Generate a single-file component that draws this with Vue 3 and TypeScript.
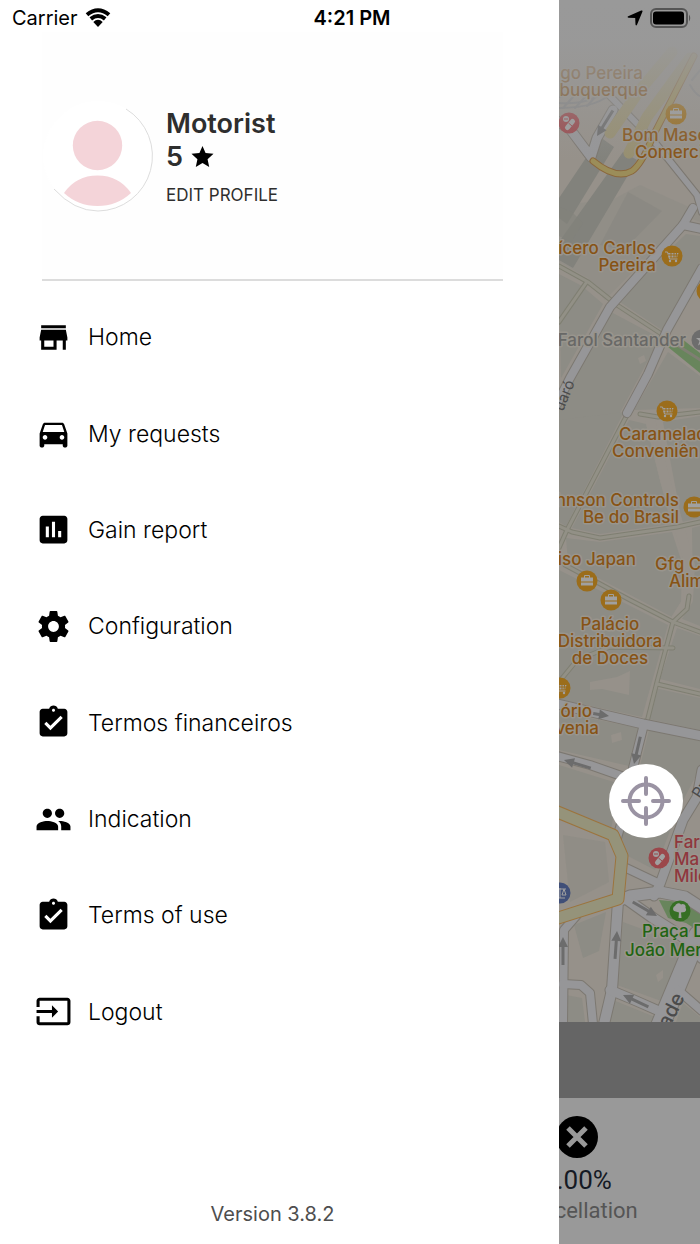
<script setup lang="ts">
interface MenuItem {
  label: string
  icon: string
}

const clipboard =
  'M19 3h-4.18C14.4 1.84 13.3 1 12 1c-1.3 0-2.4.84-2.82 2H5c-1.1 0-2 .9-2 2v14c0 1.1.9 2 2 2h14c1.1 0 2-.9 2-2V5c0-1.1-.9-2-2-2zm-7 0c.55 0 1 .45 1 1s-.45 1-1 1-1-.45-1-1 .45-1 1-1zm-2 14l-4-4 1.41-1.41L10 14.17l6.59-6.59L18 9l-8 8z'

const menu: MenuItem[] = [
  { label: 'Home', icon: 'M20 4H4v2h16V4zm1 10v-2l-1-5H4l-1 5v2h1v6h10v-6h4v6h2v-6h1zm-9 4H6v-4h6v4z' },
  {
    label: 'My requests',
    icon: 'M18.92 6.01C18.72 5.42 18.16 5 17.5 5h-11c-.66 0-1.21.42-1.42 1.01L3 12v8c0 .55.45 1 1 1h1c.55 0 1-.45 1-1v-1h12v1c0 .55.45 1 1 1h1c.55 0 1-.45 1-1v-8l-2.08-5.99zM6.5 16c-.83 0-1.5-.67-1.5-1.5S5.67 13 6.5 13s1.5.67 1.5 1.5S7.33 16 6.5 16zm11 0c-.83 0-1.5-.67-1.5-1.5s.67-1.5 1.5-1.5 1.5.67 1.5 1.5-.67 1.5-1.5 1.5zM5 11l1.5-4.5h11L19 11H5z',
  },
  {
    label: 'Gain report',
    icon: 'M19 3H5c-1.1 0-2 .9-2 2v14c0 1.1.9 2 2 2h14c1.1 0 2-.9 2-2V5c0-1.1-.9-2-2-2zM9 17H7v-7h2v7zm4 0h-2V7h2v10zm4 0h-2v-4h2v4z',
  },
  {
    label: 'Configuration',
    icon: 'M19.43 12.98c.04-.32.07-.64.07-.98s-.03-.66-.07-.98l2.11-1.65c.19-.15.24-.42.12-.64l-2-3.46c-.12-.22-.39-.3-.61-.22l-2.49 1c-.52-.4-1.08-.73-1.69-.98l-.38-2.65C14.46 2.18 14.25 2 14 2h-4c-.25 0-.46.18-.49.42l-.38 2.65c-.61.25-1.17.59-1.69.98l-2.49-1c-.23-.09-.49 0-.61.22l-2 3.46c-.13.22-.07.49.12.64l2.11 1.65c-.04.32-.07.65-.07.98s.03.66.07.98l-2.11 1.65c-.19.15-.24.42-.12.64l2 3.46c.12.22.39.3.61.22l2.49-1c.52.4 1.08.73 1.69.98l.38 2.65c.03.24.24.42.49.42h4c.25 0 .46-.18.49-.42l.38-2.65c.61-.25 1.17-.59 1.69-.98l2.49 1c.23.09.49 0 .61-.22l2-3.46c.12-.22.07-.49-.12-.64l-2.11-1.65zM12 15.5c-1.93 0-3.5-1.57-3.5-3.5s1.57-3.5 3.5-3.5 3.5 1.57 3.5 3.5-1.57 3.5-3.5 3.5z',
  },
  { label: 'Termos financeiros', icon: clipboard },
  {
    label: 'Indication',
    icon: 'M16 11c1.66 0 2.99-1.34 2.99-3S17.66 5 16 5c-1.66 0-3 1.34-3 3s1.34 3 3 3zm-8 0c1.66 0 2.99-1.34 2.99-3S9.66 5 8 5C6.34 5 5 6.34 5 8s1.34 3 3 3zm0 2c-2.33 0-7 1.17-7 3.5V19h14v-2.5c0-2.33-4.67-3.5-7-3.5zm8 0c-.29 0-.62.02-.97.05 1.16.84 1.97 1.97 1.97 3.45V19h6v-2.5c0-2.33-4.67-3.5-7-3.5z',
  },
  { label: 'Terms of use', icon: clipboard },
  {
    label: 'Logout',
    icon: 'M21 3.01H3c-1.1 0-2 .9-2 2V9h2V4.99h18v14.03H3V15H1v4.01c0 1.1.9 1.98 2 1.98h18c1.1 0 2-.88 2-1.98v-14c0-1.11-.9-2-2-2zM11 16l4-4-4-4v3H1v2h10v3z',
  },
]

type Kind = 'shop' | 'health' | 'sight' | 'park' | 'faded'

interface MapLabel {
  text: string
  x: number
  y: number
  anchor: 'start' | 'middle' | 'end'
  kind: Kind
}

const labels: MapLabel[] = [
  { text: 'go Pereira', x: 643, y: 79, anchor: 'end', kind: 'faded' },
  { text: 'buquerque', x: 648, y: 96, anchor: 'end', kind: 'faded' },
  { text: 'Bom Masc', x: 622, y: 141, anchor: 'start', kind: 'shop' },
  { text: 'Comerci', x: 635, y: 158, anchor: 'start', kind: 'shop' },
  { text: 'ícero Carlos', x: 656, y: 254, anchor: 'end', kind: 'shop' },
  { text: 'Pereira', x: 656, y: 271, anchor: 'end', kind: 'shop' },
  { text: 'Farol Santander', x: 686, y: 346, anchor: 'end', kind: 'sight' },
  { text: 'Caramelad', x: 619, y: 440, anchor: 'start', kind: 'shop' },
  { text: 'Conveniên', x: 612, y: 457, anchor: 'start', kind: 'shop' },
  { text: 'hnson Controls', x: 679, y: 506, anchor: 'end', kind: 'shop' },
  { text: 'Be do Brasil', x: 679, y: 523, anchor: 'end', kind: 'shop' },
  { text: 'iso Japan', x: 636, y: 565, anchor: 'end', kind: 'shop' },
  { text: 'Gfg Co', x: 655, y: 570, anchor: 'start', kind: 'shop' },
  { text: 'Alim', x: 669, y: 587, anchor: 'start', kind: 'shop' },
  { text: 'Palácio', x: 610, y: 630, anchor: 'middle', kind: 'shop' },
  { text: 'Distribuidora', x: 610, y: 647, anchor: 'middle', kind: 'shop' },
  { text: 'de Doces', x: 610, y: 664, anchor: 'middle', kind: 'shop' },
  { text: 'ório', x: 592, y: 717, anchor: 'end', kind: 'shop' },
  { text: 'venia', x: 599, y: 734, anchor: 'end', kind: 'shop' },
  { text: 'Far', x: 674, y: 848, anchor: 'start', kind: 'health' },
  { text: 'Mar', x: 674, y: 865, anchor: 'start', kind: 'health' },
  { text: 'Mile', x: 674, y: 882, anchor: 'start', kind: 'health' },
  { text: 'Praça D', x: 642, y: 937, anchor: 'start', kind: 'park' },
  { text: 'João Mer', x: 625, y: 956, anchor: 'start', kind: 'park' },
]

interface Pin {
  x: number
  y: number
  glyph: 'cart' | 'bag' | 'pill' | 'tree' | 'star' | 'law'
}

const pins: Pin[] = [
  { x: 676, y: 114, glyph: 'bag' },
  { x: 569, y: 123, glyph: 'pill' },
  { x: 672, y: 256, glyph: 'cart' },
  { x: 707, y: 291, glyph: 'cart' },
  { x: 702, y: 340, glyph: 'star' },
  { x: 667, y: 411, glyph: 'cart' },
  { x: 694, y: 507, glyph: 'bag' },
  { x: 587, y: 581, glyph: 'bag' },
  { x: 611, y: 600, glyph: 'bag' },
  { x: 560, y: 688, glyph: 'cart' },
  { x: 659, y: 858, glyph: 'pill' },
  { x: 560, y: 893, glyph: 'law' },
  { x: 680, y: 911, glyph: 'tree' },
]

const pinColor: Record<Pin['glyph'], string> = {
  cart: '#9b6d1b',
  bag: '#9b6d1b',
  pill: '#9b474b',
  tree: '#366f24',
  star: '#6d6d6d',
  law: '#404f78',
}

/* One-way arrows: head position, direction in degrees, shaft length. */
const arrows = [
  { x: 597, y: 136, angle: 122, length: 30 },
  { x: 609, y: 716, angle: 9, length: 16 },
  { x: 634, y: 764, angle: 103, length: 28 },
  { x: 564, y: 760, angle: 197, length: 28 },
  { x: 657, y: 916, angle: 30, length: 28 },
  { x: 617, y: 931, angle: -86, length: 28 },
  { x: 563, y: 937, angle: -90, length: 28 },
  { x: 623, y: 995, angle: 205, length: 28 },
]

/* Footpaths and narrow lanes. */
const lanes = [
  'M559 266 588 282 617 305 663 335',
  'M586 283 559 322',
  'M627 415 567 530 559 548',
  'M559 526 572 532 600 538 677 527 700 522',
  'M640 414 658 417 700 412',
  'M565 565 630 600 673 622 700 632',
  'M689 596 687 609 673 622 657 682 647 722',
  'M657 684 700 694',
  'M559 682 577 660 610 647 673 648',
]

const streets = [
  { d: 'M693 208 683 225 610 307 570 378 557 404', w: 8 },
  { d: 'M683 225 702 229', w: 8 },
  { d: 'M702 268 667 330 648 374 627 413', w: 8 },
  { d: 'M606 92 653 140 697 195 702 212', w: 6 },
  { d: 'M557 121 570 129 591 157 597 138 613 110', w: 9 },
  { d: 'M557 704 643 724 702 736', w: 9 },
  { d: 'M644 724 633 768', w: 8 },
  { d: 'M557 756 590 765 630 779', w: 8 },
  { d: 'M617 838 628 800', w: 8 },
  { d: 'M702 770 697 797 683 820 660 884 654 896', w: 9 },
  { d: 'M622 866 660 884', w: 8 },
  { d: 'M618 901 630 896 660 892 685 897 702 908', w: 11 },
  { d: 'M622 896 653 918 683 937 702 958', w: 10 },
  { d: 'M618 901 612 990 604 1024', w: 10 },
  { d: 'M610 990 634 1000 666 1014', w: 9 },
  { d: 'M698 935 660 1026', w: 18 },
  { d: 'M678 990 702 1011', w: 8 },
  { d: 'M577 915 564 930 563 1024', w: 8 },
  { d: 'M563 984 581 985 590 993 593 1024', w: 8 },
]

const avenues = 'M555 811 613 835 622 856 618 899 555 919'
</script>

<template>
  <main class="screen">
    <header class="status">
      <div class="status-left">
        <span>Carrier</span>
        <svg class="wifi" viewBox="0 0 26 20" aria-hidden="true">
          <path d="M2 6.800Q13-2.200 24 6.800M5.800 10.900Q13 5 20.200 10.900" />
          <path class="solid" d="M8.300 14Q13 9.700 17.700 14L13 19Z" />
        </svg>
      </div>
      <time class="clock">4:21 PM</time>
      <div class="status-right">
        <svg class="locate-arrow" viewBox="0 0 16 16" aria-hidden="true">
          <path d="M14.200.600Q16 0 15.400 1.800L10 14.800Q9 16.500 8.500 14.500L8.200 8 1.500 7.700Q-.500 7.300 1.200 6.200Z" />
        </svg>
        <svg class="battery" viewBox="0 0 42 20" aria-hidden="true">
          <rect class="case" x="1" y="1" width="36" height="18" rx="5" />
          <rect x="3" y="3.500" width="31" height="13" rx="3" />
          <path class="cap" d="M39 6.500q2.500 3.500 0 7z" />
        </svg>
      </div>
    </header>

    <aside class="drawer">
      <section class="profile">
        <svg class="avatar" viewBox="0 0 112 112" role="img" aria-label="Profile picture">
          <circle cx="56" cy="56" r="55" fill="#fff" />
          <path class="rim" d="M84 9A55 55 0 0 1 56 111Q32 111 12 89" />
          <circle cx="55.500" cy="45.500" r="24.700" fill="#f4d4d9" />
          <path d="M22 93Q34 75.500 55.500 75.500T89 93Q75 106 55.500 106T22 93Z" fill="#f4d4d9" />
        </svg>
        <div class="identity">
          <h1>Motorist</h1>
          <p class="rating">
            5
            <svg viewBox="0 0 24 24" aria-label="stars">
              <path d="M12 1l3.200 7.400 8.300.8-6.200 5.600 1.700 8.200-7-4.200L5 23l1.700-8.200L.5 9.200l8.300-.8z" />
            </svg>
          </p>
          <a class="edit" href="#profile">EDIT PROFILE</a>
        </div>
      </section>

      <nav class="menu">
        <a v-for="item in menu" :key="item.label" href="#">
          <svg viewBox="0 0 24 24" aria-hidden="true"><path fill-rule="evenodd" :d="item.icon" /></svg>
          <span>{{ item.label }}</span>
        </a>
      </nav>

      <footer class="version">Version 3.8.2</footer>
    </aside>

    <section class="behind">
      <div class="map">
        <svg class="map-art" viewBox="559 0 141 1022" preserveAspectRatio="xMinYMin slice" role="img" aria-label="Map">
          <defs>
            <linearGradient id="haze" x1="0" y1="0" x2="0" y2="1">
              <stop offset="0" stop-color="#999" />
              <stop offset=".25" stop-color="#999" stop-opacity=".96" />
              <stop offset=".5" stop-color="#999" stop-opacity=".65" />
              <stop offset="1" stop-color="#999" stop-opacity="0" />
            </linearGradient>
          </defs>
          <rect x="559" width="141" height="1022" fill="#96918a" />

          <g class="blocks">
            <path d="M612 200 640 185 700 212V222L688 217 676 228 605 300 588 278 559 262V205Z" opacity=".6" />
            <path d="M617 300 686 234 700 236V262L662 330Z" />
            <path d="M559 274 582 286 603 304 561 378Z" />
            <path d="M611 312 660 338 621 411 559 500V400L576 377Z" />
            <path d="M668 352 700 376V408L634 410Z" />
            <path d="M559 420 624 412 566 526 559 522Z" />
            <path d="M629 420 646 424 671 524 600 534 572 528Z" />
            <path d="M663 422 700 416V518L682 522Z" />
            <path d="M566 538 600 542 672 532 682 563 681 602 672 617 568 562Z" />
            <path d="M692 528 700 526V626L680 618 693 596Z" />
            <path d="M559 570 668 625 642 717 559 699Z" />
            <path d="M677 628 700 636V689L660 679Z" />
            <path d="M655 688 700 698V730L649 719Z" />
            <path d="M559 712 638 728 629 766 559 750Z" />
            <path d="M649 730 700 741V768L678 810 655 870 626 855 617 834 632 798Z" />
            <path d="M559 765 620 784 611 829 559 807Z" />
            <path d="M563 835 605 842 609 882 570 902Z" opacity=".7" />
            <path d="M574 925 606 912 599 951 583 958Z" />
            <path d="M623 922 680 943 690 953 664 1002 617 985Z" />
            <path d="M566 995 582 998 585 1022H567ZM613 1000 655 1017V1022H608Z" />
            <path d="M683 1003 700 1017V1022H676Z" />
          </g>
          <g class="buildings">
            <path d="M600 137 614 147 567 224 559 218V198Z" />
            <path d="M623 152 637 160 573 268 559 260V242Z" />
            <path d="M559 207 572 212 583 223 571 242 559 236Z" opacity=".6" />
            <path d="M628 192 662 211 624 250 600 245Z" opacity=".35" />
          </g>
          <g class="plots">
            <path d="M590 682 617 677 630 671 629 695 602 689 590 690Z" />
            <path d="M611 735 621 732 622 740 612 743ZM638 358 644 355 646 361 640 364Z" />
            <path d="M656 975 663 970 663 978 658 982Z" />
          </g>

          <path class="alley" d="M650 419 665 480 680 530 690 565 688 600 676 619" />
          <g class="lanes"><path v-for="d in lanes" :key="d" :d="d" /></g>
          <g class="lanes-inner"><path v-for="d in lanes" :key="d" :d="d" /></g>

          <path class="green" d="M668 347 677 335 700 353V373Z" />
          <path class="green" d="M659 900 690 903 700 914V932L686 923 668 918Z" />

          <g class="ramps">
            <path d="M559 108Q600 108 614 90M559 103Q590 105 606 90M690 85Q697 97 702 96M692 80 702 68" />
            <path d="M563 108 573 97M575 108 586 96M587 106 598 94M559 97 602 88" />
          </g>
          <path class="lane-deep" d="M663 335 680 347 702 361" />
          <g class="street-edge">
            <path v-for="s in streets" :key="s.d" :d="s.d" :stroke-width="s.w + 2" />
          </g>
          <g class="street-fill">
            <path v-for="s in streets" :key="s.d" :d="s.d" :stroke-width="s.w" />
          </g>

          <g class="expressway">
            <path d="M610 133 640 90 672 52" />
            <path d="M629 153 647 117 690 58" />
          </g>
          <path class="ramp-edge" d="M593 161Q616 180 632 171 642 164 653 136L694 56" />
          <path class="ramp-fill" d="M593 161Q616 180 632 171 642 164 653 136L694 56" />
          <path class="avenue-edge" :d="avenues" />
          <path class="avenue-fill" :d="avenues" />

          <g
            v-for="(a, i) in arrows"
            :key="i"
            class="arrow"
            :transform="`translate(${a.x} ${a.y}) rotate(${a.angle})`"
          >
            <path :d="`M0 0-10-5V-1.500H${-a.length}V1.500H-10V5Z`" />
          </g>

          <g class="road-names">
            <text transform="translate(563 412) rotate(-68)">uaró</text>
            <text transform="translate(700 799) rotate(-58)">Pr</text>
            <text class="big" transform="translate(669 1029) rotate(-63)">ade</text>
          </g>

          <text
            v-for="(l, i) in labels"
            :key="i"
            :class="['label', l.kind]"
            :x="l.x"
            :y="l.y"
            :text-anchor="l.anchor"
          >{{ l.text }}</text>

          <g v-for="(p, i) in pins" :key="i" :transform="`translate(${p.x} ${p.y})`" class="pin">
            <circle r="10.500" :fill="pinColor[p.glyph]" />
            <g v-if="p.glyph === 'cart'">
              <path class="line" d="M-7-4H-4.500L-2.500 3H5.500" />
              <path d="M-4-3H6.500L5 1.500H-3Z" />
              <circle cx="-2" cy="5" r="1.200" /><circle cx="4" cy="5" r="1.200" />
              <path class="cut" :stroke="pinColor.cart" d="M-1-3V2M2-3V2M4.500-3 4 2M-4-1H6" />
            </g>
            <g v-else-if="p.glyph === 'bag'">
              <path class="line" d="M-2.500-3V-5.500H2.500V-3" />
              <path d="M-6-3.500H6V.500H-6ZM-6 1.500H6V4.500H-6Z" />
            </g>
            <g v-else-if="p.glyph === 'pill'">
              <circle cx="-3" cy="-4" r="3" />
              <path class="capsule" d="M-1.500 4.500 3.500-1.500" />
              <path class="cut" :stroke="pinColor.pill" d="M-5-4H-1M-.500 0 3 3" />
            </g>
            <g v-else-if="p.glyph === 'tree'">
              <path d="M-6 0a3 3 0 0 1 1-5 3.500 3.500 0 0 1 6-1.500 3 3 0 0 1 4.500 3.500 2.500 2.500 0 0 1-1 4L1 1.500 1.500 7H-1.500L-1 1.500Z" />
            </g>
            <path v-else-if="p.glyph === 'star'" d="M0-6 1.500-2H6L2.500 1 4 5.500 0 3-4 5.500-2.500 1-6-2H-1.500Z" />
            <path v-else class="line" d="M-4-4H6M0-5V5M-3 5H5M2 2 4-4 6 2ZM-6 2-4-4-2 2Z" />
          </g>

          <rect x="559" width="141" height="160" fill="url(#haze)" />
        </svg>

        <button class="locate" type="button" aria-label="Centre on my location">
          <svg viewBox="0 0 50 50" aria-hidden="true">
            <circle cx="25" cy="25" r="16.500" />
            <path d="M25 2V18M25 32V48M2 25H18M32 25H48" />
          </svg>
        </button>
      </div>

      <div class="band"></div>

      <div class="stats">
        <div class="stat">
          <svg viewBox="0 0 42 42" aria-hidden="true">
            <circle cx="21" cy="21" r="21" />
            <path d="M12 12 30 30M30 12 12 30" />
          </svg>
          <strong>0.00%</strong>
          <span>Cancellation</span>
        </div>
      </div>
    </section>
  </main>
</template>

<style>
body {
  margin: 0;
  background: #fff;
}
</style>

<style scoped>
.screen {
  position: relative;
  display: grid;
  grid-template-columns: minmax(0, 559fr) minmax(0, 141fr);
  min-height: 100vh;
  font-family: Inter, "Liberation Sans", sans-serif;
  color: #000;
}

.status {
  position: absolute;
  inset: 0 0 auto;
  z-index: 2;
  display: grid;
  grid-template-columns: 1fr auto 1fr;
  align-items: center;
  height: 36px;
  padding: 0 8px 0 12px;
  font-size: 20px;
}
.status-left,
.status-right {
  display: flex;
  align-items: center;
  gap: 7px;
}
.status-right {
  justify-content: flex-end;
}
.clock {
  font-weight: 600;
}
.wifi {
  width: 26px;
  height: 20px;
  fill: none;
  stroke: #000;
  stroke-width: 4;
}
.wifi .solid {
  fill: #000;
  stroke: none;
}
.locate-arrow {
  width: 16px;
  height: 16px;
}
.battery {
  width: 42px;
  height: 20px;
}
.battery .case {
  fill: none;
  stroke: #555;
  stroke-width: 2;
}
.battery .cap {
  fill: #555;
}

.drawer {
  display: flex;
  flex-direction: column;
  padding: 32px 56px 0 42px;
  background: #fff;
}
.profile {
  display: flex;
  align-items: center;
  gap: 12px;
  height: 247px;
  border-bottom: 2px solid #dcdcdc;
  background: #fefefe;
}
.avatar {
  width: 112px;
  height: 112px;
}
.rim {
  fill: none;
  stroke: #ddd;
}
.identity {
  display: flex;
  flex-direction: column;
  color: #2e2e2e;
}
.identity h1,
.rating {
  margin: 0;
  font-size: 27px;
  line-height: 33px;
  font-weight: 600;
}
.rating {
  display: flex;
  align-items: center;
  gap: 8px;
}
.rating svg {
  width: 23px;
  height: 23px;
  fill: #000;
}
.edit {
  margin-top: 12px;
  font-size: 17px;
  line-height: 20px;
  color: inherit;
  text-decoration: none;
}

.menu {
  display: flex;
  flex: 1;
  flex-direction: column;
  margin: 8px 0 0 -7px;
}
.menu a {
  display: flex;
  flex: 1;
  align-items: center;
  gap: 16px;
  font-size: 23px;
  font-weight: 300;
  color: #000;
  text-decoration: none;
}
.menu svg {
  width: 37px;
  height: 37px;
}
.version {
  padding: 142px 0 18px;
  font-size: 20px;
  line-height: 24px;
  text-align: center;
  color: #4e4e4e;
}

.behind {
  display: flex;
  flex-direction: column;
  overflow: hidden;
  background: #999;
}
.map {
  position: relative;
  flex: 1;
}
.map-art {
  position: absolute;
  width: 100%;
  height: 100%;
}
.blocks {
  fill: #8d8c85;
}
.buildings {
  fill: #82827c;
}
.plots {
  fill: #96918a;
}
.map-art path {
  stroke-linejoin: round;
}
.alley,
.lanes,
.lanes-inner,
.lane-deep,
.ramps,
.street-edge,
.street-fill,
.expressway,
.ramp-edge,
.ramp-fill,
.avenue-edge,
.avenue-fill {
  fill: none;
  stroke-linecap: round;
}
.alley {
  stroke: #96918a;
  stroke-width: 10;
}
.lanes {
  stroke: #7f7f72;
  stroke-width: 5;
}
.lanes-inner {
  stroke: #929086;
  stroke-width: 3;
}
.lane-deep {
  stroke: #7f7f72;
  stroke-width: 3;
}
.green {
  fill: #68855c;
}
.ramps {
  stroke: #858585;
  stroke-width: 2;
}
.street-edge {
  stroke: #7c7871;
}
.street-fill {
  stroke: #969698;
}
.expressway {
  stroke: #978f70;
  stroke-width: 11;
}
.ramp-edge {
  stroke: #8b673c;
  stroke-width: 7;
}
.ramp-fill {
  stroke: #9b8d59;
  stroke-width: 5;
}
.avenue-edge {
  stroke: #9c743d;
  stroke-width: 13;
}
.avenue-fill {
  stroke: #95937a;
  stroke-width: 11;
}
.arrow {
  fill: #6c6c6c;
}
.road-names {
  font-size: 15px;
  font-weight: 400;
  fill: #4b4b4b;
}
.road-names .big {
  font-size: 20px;
  font-weight: 500;
}
.label {
  font-size: 17px;
  font-weight: 500;
  paint-order: stroke;
  stroke: #99958d;
  stroke-width: 3px;
  stroke-linejoin: round;
}
.shop {
  fill: #875315;
}
.faded {
  fill: #7f4f17;
}
.health {
  fill: #8f373d;
}
.sight {
  fill: #686866;
}
.park {
  fill: #1f6412;
}
.pin {
  fill: #a0a0a0;
}
.pin .line {
  fill: none;
  stroke: #a0a0a0;
  stroke-width: 1;
}
.pin .cut {
  fill: none;
  stroke-width: 1;
}
.pin .capsule {
  fill: none;
  stroke: #a0a0a0;
  stroke-width: 5;
  stroke-linecap: round;
}

.locate {
  position: absolute;
  top: 764px;
  right: 17px;
  display: grid;
  place-items: center;
  width: 74px;
  height: 74px;
  padding: 0;
  border: 0;
  border-radius: 50%;
  background: #fff;
}
.locate svg {
  width: 50px;
  height: 50px;
  fill: none;
  stroke: #9a93a3;
  stroke-width: 4;
  stroke-linecap: round;
}

.band {
  height: 76px;
  background: #656565;
}
.stats {
  height: 146px;
  box-sizing: border-box;
  padding-top: 18px;
}
.stat {
  display: flex;
  flex-direction: column;
  align-items: center;
  width: 122px;
  margin-left: -43px;
  font-family: Roboto, sans-serif;
}
.stat svg {
  width: 42px;
  height: 42px;
}
.stat path {
  stroke: #999;
  stroke-width: 5;
}
.stat strong {
  margin-top: 6px;
  font-size: 26px;
  line-height: 32px;
  font-weight: 400;
  color: #151a24;
}
.stat span {
  font-size: 22px;
  line-height: 30px;
  color: #555;
}
</style>
